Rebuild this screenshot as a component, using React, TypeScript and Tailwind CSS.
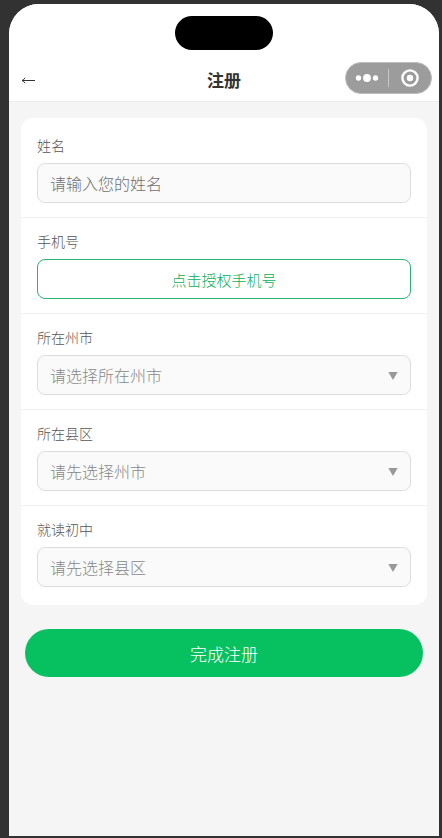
import React, { useState } from 'react';

const regions: Record<string, Record<string, string[]>> = {
  昆明市: {
    五华区: ['五华一中', '五华二中'],
    盘龙区: ['盘龙一中', '盘龙二中'],
  },
  大理州: {
    大理市: ['大理一中', '大理二中'],
    祥云县: ['祥云一中', '祥云四中'],
  },
};

interface SelectFieldProps {
  id: string;
  label: string;
  placeholder: string;
  value: string;
  options: string[];
  onChange: (value: string) => void;
}

const fieldClass = 'border-b border-[#eeeeee] px-4 py-[14px] last:border-b-0';
const labelClass = 'mb-2 block text-sm leading-[19px] text-[#555555]';

const SelectField: React.FC<SelectFieldProps> = ({ id, label, placeholder, value, options, onChange }) => (
  <div className={fieldClass}>
    <label htmlFor={id} className={labelClass}>{label}</label>
    <div className="relative">
      <select
        id={id}
        value={value}
        onChange={e => onChange(e.target.value)}
        className={`block h-10 w-full appearance-none rounded-lg border border-[#dddddd] bg-[#fafafa] pl-3 pr-8 text-base outline-none ${value ? 'text-[#333333]' : 'text-[#888888]'}`}
      >
        <option value="">{placeholder}</option>
        {options.map(o => <option key={o} value={o}>{o}</option>)}
      </select>
      <svg viewBox="0 0 10 8" className="pointer-events-none absolute right-[13px] top-[17px] h-2 w-[10px]" aria-hidden="true">
        <path d="M0.3 0H9.7L5 8Z" fill="#999999" />
      </svg>
    </div>
  </div>
);

const Capsule = () => (
  <div className="absolute right-[7px] top-[58px] flex h-8 w-[87px] items-center rounded-full border border-[#bdbdbd] bg-[#9c9c9c]">
    <button type="button" aria-label="更多" className="flex h-full flex-1 items-center justify-center">
      <svg viewBox="0 0 24 8" className="h-2 w-6" fill="#ffffff">
        <circle cx="3.5" cy="4" r="2.7" />
        <circle cx="12" cy="4" r="3.9" />
        <circle cx="20.5" cy="4" r="2.7" />
      </svg>
    </button>
    <span className="h-[18px] w-px bg-[#c8c8c8]" />
    <button type="button" aria-label="关闭" className="flex h-full flex-1 items-center justify-center">
      <svg viewBox="0 0 18 18" className="h-[18px] w-[18px]">
        <circle cx="9" cy="9" r="7.6" fill="none" stroke="#ffffff" strokeWidth="2.4" />
        <circle cx="9" cy="9" r="3.2" fill="#ffffff" />
      </svg>
    </button>
  </div>
);

const App: React.FC = () => {
  const [name, setName] = useState('');
  const [city, setCity] = useState('');
  const [county, setCounty] = useState('');
  const [school, setSchool] = useState('');

  const counties = city ? Object.keys(regions[city]) : [];
  const schools = city && county ? regions[city][county] : [];

  const handleCity = (value: string) => {
    setCity(value);
    setCounty('');
    setSchool('');
  };

  const handleCounty = (value: string) => {
    setCounty(value);
    setSchool('');
  };

  return (
    <div className="flex min-h-screen flex-col bg-[#323233] pb-0.5 pl-[9px] pr-[3px] pt-1 font-['Noto_Sans_CJK_SC',sans-serif] font-light">
      <div className="relative flex flex-1 flex-col overflow-hidden rounded-t-[30px] bg-[#f5f5f5]">
        <header className="border-b border-[#ebebeb] bg-white pt-3">
          <div className="mx-auto h-[34px] w-[98px] rounded-full bg-black" />
          <div className="mb-px mt-[10px] grid h-10 grid-cols-3 items-center px-3">
            <button type="button" aria-label="返回" className="justify-self-start">
              <svg viewBox="0 0 14 8" className="h-2 w-[14px]" fill="none" stroke="#333333">
                <path d="M1.2 4.5H14" />
                <path d="M4 1.8Q3 3.8 1 4.5Q3 5.2 4 7.2" />
              </svg>
            </button>
            <h1 className="text-center text-[17px] font-bold leading-6 text-[#333333]">注册</h1>
          </div>
        </header>
        <Capsule />

        <form className="px-3 pt-4" onSubmit={e => e.preventDefault()}>
          <div className="rounded-xl bg-white py-1">
            <div className={fieldClass}>
              <label htmlFor="name" className={labelClass}>姓名</label>
              <input
                id="name"
                value={name}
                onChange={e => setName(e.target.value)}
                placeholder="请输入您的姓名"
                className="block h-10 w-full rounded-lg border border-[#dddddd] bg-[#fafafa] px-3 text-base text-[#333333] outline-none placeholder:text-[#707070]"
              />
            </div>
            <div className={fieldClass}>
              <label htmlFor="phone" className={labelClass}>手机号</label>
              <button id="phone" type="button" className="block h-10 w-full rounded-lg border border-[#2bb573] bg-white pt-0.5 text-[15px] text-[#07b158]">
                点击授权手机号
              </button>
            </div>
            <SelectField id="city" label="所在州市" placeholder="请选择所在州市" value={city} options={Object.keys(regions)} onChange={handleCity} />
            <SelectField id="county" label="所在县区" placeholder="请先选择州市" value={county} options={counties} onChange={handleCounty} />
            <SelectField id="school" label="就读初中" placeholder="请先选择县区" value={school} options={schools} onChange={setSchool} />
          </div>
          <div className="px-1 py-6">
            <button type="submit" className="block h-12 w-full rounded-full bg-[#07c160] pt-0.5 text-[17px] text-white">完成注册</button>
          </div>
        </form>
      </div>
    </div>
  );
};

export default App;
